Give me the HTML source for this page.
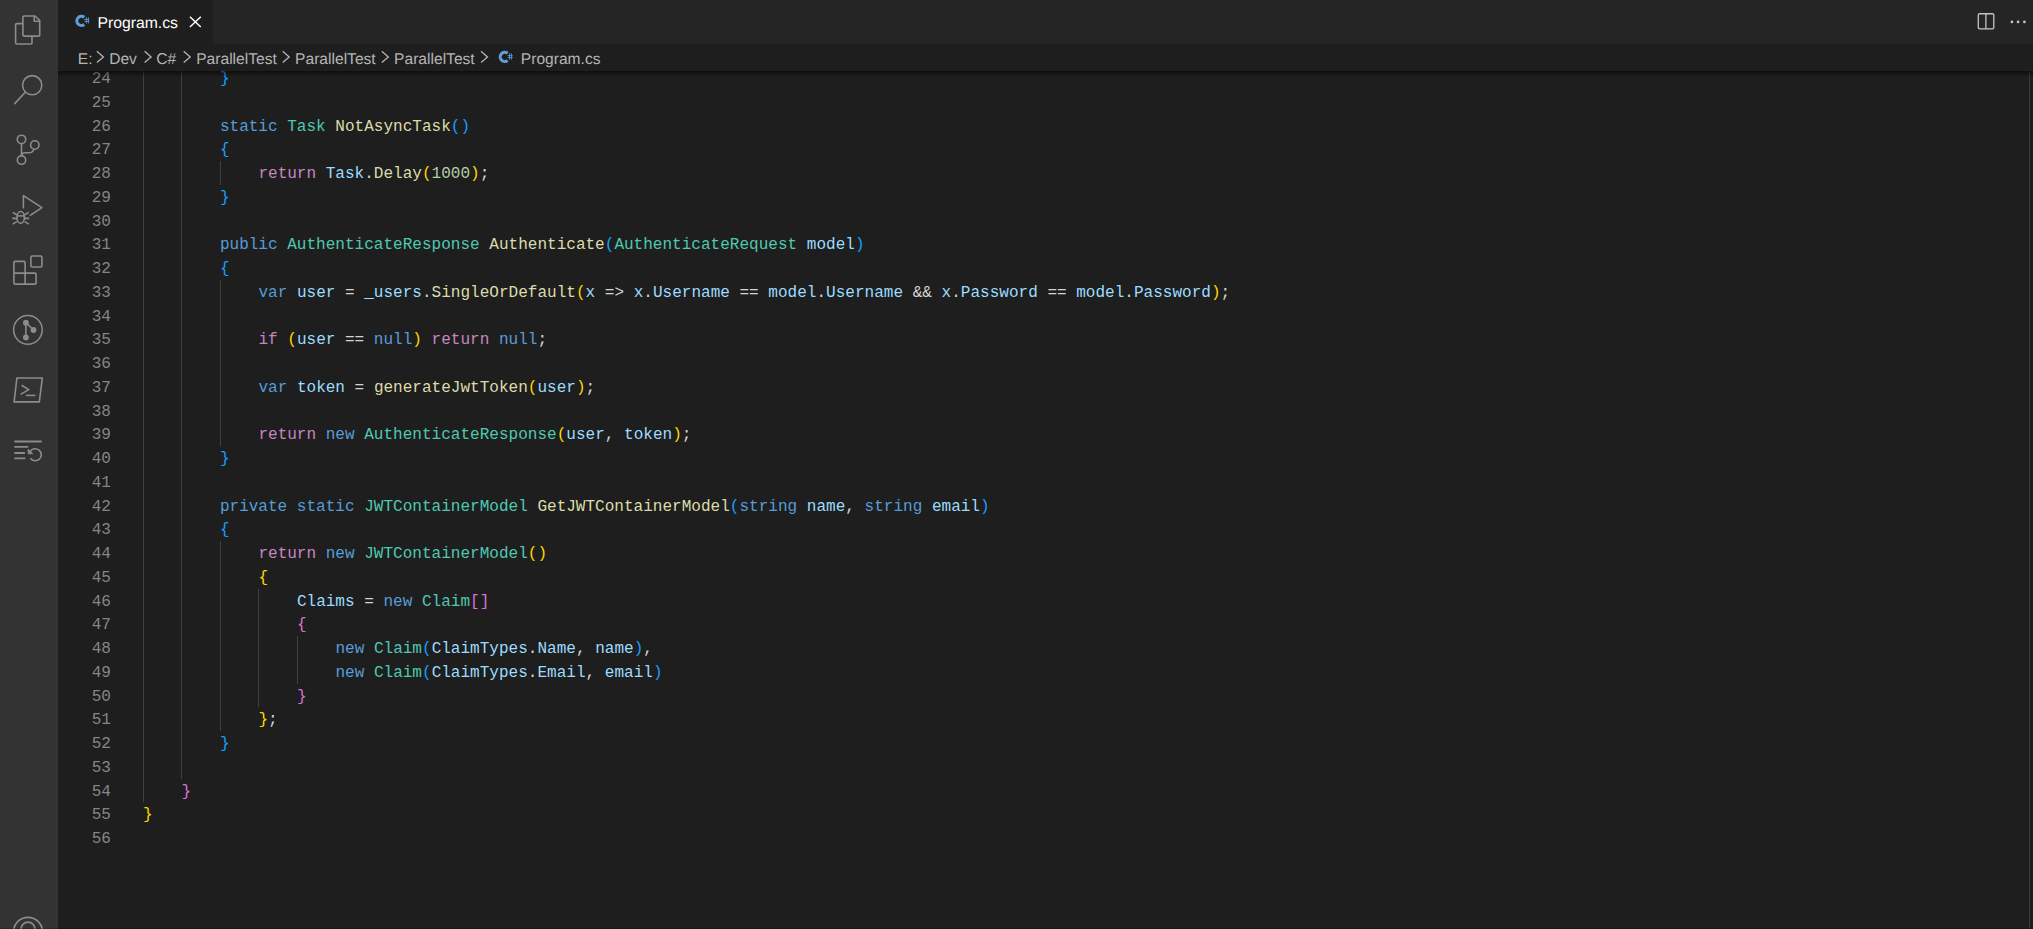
<!DOCTYPE html>
<html><head><meta charset="utf-8">
<style>
*{margin:0;padding:0;box-sizing:border-box}
html,body{width:2033px;height:929px;overflow:hidden;background:#1e1e1e}
body{position:relative;font-family:"Liberation Sans",sans-serif}
#act{position:absolute;left:0;top:0;width:58px;height:929px;background:#333333}
#tabs{position:absolute;left:58px;top:0;width:1975px;height:44px;background:#252526}
#tab{position:absolute;left:58px;top:0;width:155px;height:44px;background:#1e1e1e}
#crumbs{position:absolute;left:58px;top:44px;width:1975px;height:27px;background:#1e1e1e;z-index:5}
#shadow{position:absolute;left:58px;top:71px;width:1975px;height:6px;background:linear-gradient(rgba(0,0,0,0.55),rgba(0,0,0,0));z-index:9}
.ln{position:absolute;left:58px;width:53px;text-align:right;height:23.75px;line-height:23.75px;font-family:"Liberation Mono",monospace;font-size:16.04px;color:#858585;white-space:pre}
.cl{position:absolute;height:23.75px;line-height:23.75px;font-family:"Liberation Mono",monospace;font-size:16.04px;white-space:pre}
.g{position:absolute;width:1px;background:#404040}
.bc{position:absolute;top:49.5px;height:20px;line-height:20px;font-size:15.6px;color:#b4b4b4;white-space:pre;z-index:7;text-rendering:geometricPrecision}
svg{position:absolute;overflow:visible}
</style></head><body>
<div id="act"></div>
<div id="tabs"></div>
<div id="tab"></div>
<div id="crumbs"></div>
<div id="shadow"></div>

<!-- activity bar icons -->
<svg style="left:0;top:0;z-index:8" width="58" height="929" fill="none" stroke="#8c8c8c" stroke-width="1.6" stroke-linejoin="round">
  <!-- files -->
  <path d="M22.9 23.6H16.8a1.2 1.2 0 0 0-1.2 1.2V42.8a1.2 1.2 0 0 0 1.2 1.2H30.8a1.2 1.2 0 0 0 1.2-1.2V36.1"/>
  <path d="M24.1 16H35L39.7 20.3V34.9a1.2 1.2 0 0 1-1.2 1.2H24.1a1.2 1.2 0 0 1-1.2-1.2V17.2a1.2 1.2 0 0 1 1.2-1.2Z"/>
  <path d="M34.2 16.4V21.2H39.4"/>
  <!-- search -->
  <circle cx="32.2" cy="85.2" r="9.6"/>
  <path d="M25.2 92.2L14.7 103.6" stroke-linecap="round"/>
  <!-- source control -->
  <circle cx="21.5" cy="139.4" r="4.2"/>
  <circle cx="34.8" cy="145" r="4.2"/>
  <circle cx="21.5" cy="160.1" r="4.2"/>
  <path d="M21.5 143.6V155.9"/>
  <path d="M34 149.2C33 151.8 31.5 152.8 29 152.8H25C23 152.8 21.8 154 21.5 155.5"/>
  <!-- run & debug -->
  <path d="M23.4 208.5V195.6L41.9 207.6L29.8 215.6"/>
  <ellipse cx="20.7" cy="217.4" rx="3.7" ry="5.9"/>
  <path d="M16.8 215.9H24.6"/>
  <path d="M12.6 212.4L16.8 214.8M28.8 212.4L24.6 214.8M12.2 218.4H17M29.2 218.4H24.4M12.6 224.1L16.8 221.6M28.8 224.1L24.6 221.6"/>
  <!-- extensions -->
  <path d="M13.9 262.6a1.2 1.2 0 0 1 1.2-1.2H23.9a1.2 1.2 0 0 1 1.2 1.2V273.1H34.9a1.2 1.2 0 0 1 1.2 1.2V282.9a1.2 1.2 0 0 1-1.2 1.2H15.1a1.2 1.2 0 0 1-1.2-1.2Z"/>
  <path d="M13.9 273.1H25.1V284.1"/>
  <rect x="30.9" y="256" width="11" height="11" rx="1.2"/>
  <!-- gitlens -->
  <circle cx="27.9" cy="329.85" r="14.3" stroke-width="1.5"/>
  <path d="M25.9 322.7V337.4M25.9 322.7L33.5 330"/>
  <circle cx="25.9" cy="322.7" r="2.9" fill="#8c8c8c" stroke="none"/>
  <circle cx="33.5" cy="330" r="2.9" fill="#8c8c8c" stroke="none"/>
  <circle cx="25.9" cy="337.4" r="2.9" fill="#8c8c8c" stroke="none"/>
  <!-- powershell -->
  <path d="M16.9 378H42.3L39.3 401.9H14.1Z"/>
  <path d="M21.6 385.3L28.75 389.6L20.6 394.4"/>
  <path d="M25.9 395.4H35.4"/>
  <!-- timeline -->
  <path d="M14.3 441.5H41.7M14.3 446.9H28.2M14.3 453H24.9M14.3 458.4H25.3" stroke-width="1.8"/>
  <path d="M30.2 451.5A6 6 0 1 1 30.4 458.2"/>
  <path d="M28.1 449.2V453.8H32.8Z" fill="#8c8c8c" stroke-width="0.8"/>
  <!-- accounts (cropped) -->
  <circle cx="28" cy="932" r="14.6" stroke-width="1.6"/>
  <circle cx="28" cy="929" r="6.9" stroke-width="1.6"/>
</svg>

<!-- tab -->
<svg style="left:0;top:0;z-index:8" width="2033" height="44" fill="none">
  <path d="M84.28 17.23A4.6 4.6 0 1 0 84.28 24.47" stroke="#5f9dd8" stroke-width="3.1"/>
  <path d="M86.4 17.2V23.5M88.4 17.2V23.5M84.3 19.5H89.4M84.3 21.4H89.4" stroke="#5f9dd8" stroke-width="0.85"/>
  <path d="M189.9 16.7L200.8 27M200.8 16.7L189.9 27" stroke="#ffffff" stroke-width="1.5"/>
  <rect x="1978.3" y="13.75" width="15.5" height="15.15" rx="1.3" stroke="#c5c5c5" stroke-width="1.3"/>
  <path d="M1985.9 13.75V28.9" stroke="#c5c5c5" stroke-width="1.3"/>
  <circle cx="2011.9" cy="21.9" r="1.35" fill="#c5c5c5"/>
  <circle cx="2018.05" cy="21.9" r="1.35" fill="#c5c5c5"/>
  <circle cx="2024.4" cy="21.9" r="1.35" fill="#c5c5c5"/>
</svg>
<div style="position:absolute;left:97.4px;top:13.55px;height:20px;line-height:20px;font-size:15.75px;color:#ffffff;white-space:pre;z-index:8;text-rendering:geometricPrecision">Program.cs</div>

<!-- breadcrumbs -->
<div class="bc" style="left:77.8px">E:</div>
<div class="bc" style="left:109.2px">Dev</div>
<div class="bc" style="left:156.3px">C#</div>
<div class="bc" style="left:196.2px">ParallelTest</div>
<div class="bc" style="left:295.1px">ParallelTest</div>
<div class="bc" style="left:394.1px">ParallelTest</div>
<div class="bc" style="left:520.8px">Program.cs</div>
<svg style="left:0;top:0;z-index:8" width="2033" height="72" fill="none" stroke="#b4b4b4" stroke-width="1.3">
  <path d="M96.9 51.3L103.4 57L96.9 62.5M144.6 51.3L151.1 57L144.6 62.5M183.7 51.3L190.2 57L183.7 62.5M282.7 51.3L289.2 57L282.7 62.5M381.8 51.3L388.3 57L381.8 62.5M481 51.3L487.5 57L481 62.5"/>
  <path d="M507.63 53.33A4.6 4.6 0 1 0 507.63 60.57" stroke="#5f9dd8" stroke-width="3.1"/>
  <path d="M509.5 53.3V59.7M511.4 53.3V59.7M507.6 55.6H512.7M507.6 57.5H512.7" stroke="#5f9dd8" stroke-width="0.85"/>
</svg>

<div class="ln" style="top:68px">24</div>
<div class="cl" style="top:68px;left:219.90px"><span style="color:#179fff">}</span></div>
<div class="ln" style="top:92px">25</div>
<div class="ln" style="top:116px">26</div>
<div class="cl" style="top:116px;left:219.90px"><span style="color:#569cd6">static</span><span style="color:#d4d4d4"> </span><span style="color:#4ec9b0">Task</span><span style="color:#d4d4d4"> </span><span style="color:#dcdcaa">NotAsyncTask</span><span style="color:#179fff">()</span></div>
<div class="ln" style="top:139px">27</div>
<div class="cl" style="top:139px;left:219.90px"><span style="color:#179fff">{</span></div>
<div class="ln" style="top:163px">28</div>
<div class="cl" style="top:163px;left:258.40px"><span style="color:#c586c0">return</span><span style="color:#d4d4d4"> </span><span style="color:#9cdcfe">Task</span><span style="color:#d4d4d4">.</span><span style="color:#dcdcaa">Delay</span><span style="color:#ffd700">(</span><span style="color:#b5cea8">1000</span><span style="color:#ffd700">)</span><span style="color:#d4d4d4">;</span></div>
<div class="ln" style="top:187px">29</div>
<div class="cl" style="top:187px;left:219.90px"><span style="color:#179fff">}</span></div>
<div class="ln" style="top:211px">30</div>
<div class="ln" style="top:234px">31</div>
<div class="cl" style="top:234px;left:219.90px"><span style="color:#569cd6">public</span><span style="color:#d4d4d4"> </span><span style="color:#4ec9b0">AuthenticateResponse</span><span style="color:#d4d4d4"> </span><span style="color:#dcdcaa">Authenticate</span><span style="color:#179fff">(</span><span style="color:#4ec9b0">AuthenticateRequest</span><span style="color:#d4d4d4"> </span><span style="color:#9cdcfe">model</span><span style="color:#179fff">)</span></div>
<div class="ln" style="top:258px">32</div>
<div class="cl" style="top:258px;left:219.90px"><span style="color:#179fff">{</span></div>
<div class="ln" style="top:282px">33</div>
<div class="cl" style="top:282px;left:258.40px"><span style="color:#569cd6">var</span><span style="color:#d4d4d4"> </span><span style="color:#9cdcfe">user</span><span style="color:#d4d4d4"> = </span><span style="color:#9cdcfe">_users</span><span style="color:#d4d4d4">.</span><span style="color:#dcdcaa">SingleOrDefault</span><span style="color:#ffd700">(</span><span style="color:#9cdcfe">x</span><span style="color:#d4d4d4"> =&gt; </span><span style="color:#9cdcfe">x</span><span style="color:#d4d4d4">.</span><span style="color:#9cdcfe">Username</span><span style="color:#d4d4d4"> == </span><span style="color:#9cdcfe">model</span><span style="color:#d4d4d4">.</span><span style="color:#9cdcfe">Username</span><span style="color:#d4d4d4"> &amp;&amp; </span><span style="color:#9cdcfe">x</span><span style="color:#d4d4d4">.</span><span style="color:#9cdcfe">Password</span><span style="color:#d4d4d4"> == </span><span style="color:#9cdcfe">model</span><span style="color:#d4d4d4">.</span><span style="color:#9cdcfe">Password</span><span style="color:#ffd700">)</span><span style="color:#d4d4d4">;</span></div>
<div class="ln" style="top:306px">34</div>
<div class="ln" style="top:329px">35</div>
<div class="cl" style="top:329px;left:258.40px"><span style="color:#c586c0">if</span><span style="color:#d4d4d4"> </span><span style="color:#ffd700">(</span><span style="color:#9cdcfe">user</span><span style="color:#d4d4d4"> == </span><span style="color:#569cd6">null</span><span style="color:#ffd700">)</span><span style="color:#d4d4d4"> </span><span style="color:#c586c0">return</span><span style="color:#d4d4d4"> </span><span style="color:#569cd6">null</span><span style="color:#d4d4d4">;</span></div>
<div class="ln" style="top:353px">36</div>
<div class="ln" style="top:377px">37</div>
<div class="cl" style="top:377px;left:258.40px"><span style="color:#569cd6">var</span><span style="color:#d4d4d4"> </span><span style="color:#9cdcfe">token</span><span style="color:#d4d4d4"> = </span><span style="color:#dcdcaa">generateJwtToken</span><span style="color:#ffd700">(</span><span style="color:#9cdcfe">user</span><span style="color:#ffd700">)</span><span style="color:#d4d4d4">;</span></div>
<div class="ln" style="top:401px">38</div>
<div class="ln" style="top:424px">39</div>
<div class="cl" style="top:424px;left:258.40px"><span style="color:#c586c0">return</span><span style="color:#d4d4d4"> </span><span style="color:#569cd6">new</span><span style="color:#d4d4d4"> </span><span style="color:#4ec9b0">AuthenticateResponse</span><span style="color:#ffd700">(</span><span style="color:#9cdcfe">user</span><span style="color:#d4d4d4">, </span><span style="color:#9cdcfe">token</span><span style="color:#ffd700">)</span><span style="color:#d4d4d4">;</span></div>
<div class="ln" style="top:448px">40</div>
<div class="cl" style="top:448px;left:219.90px"><span style="color:#179fff">}</span></div>
<div class="ln" style="top:472px">41</div>
<div class="ln" style="top:496px">42</div>
<div class="cl" style="top:496px;left:219.90px"><span style="color:#569cd6">private</span><span style="color:#d4d4d4"> </span><span style="color:#569cd6">static</span><span style="color:#d4d4d4"> </span><span style="color:#4ec9b0">JWTContainerModel</span><span style="color:#d4d4d4"> </span><span style="color:#dcdcaa">GetJWTContainerModel</span><span style="color:#179fff">(</span><span style="color:#569cd6">string</span><span style="color:#d4d4d4"> </span><span style="color:#9cdcfe">name</span><span style="color:#d4d4d4">, </span><span style="color:#569cd6">string</span><span style="color:#d4d4d4"> </span><span style="color:#9cdcfe">email</span><span style="color:#179fff">)</span></div>
<div class="ln" style="top:519px">43</div>
<div class="cl" style="top:519px;left:219.90px"><span style="color:#179fff">{</span></div>
<div class="ln" style="top:543px">44</div>
<div class="cl" style="top:543px;left:258.40px"><span style="color:#c586c0">return</span><span style="color:#d4d4d4"> </span><span style="color:#569cd6">new</span><span style="color:#d4d4d4"> </span><span style="color:#4ec9b0">JWTContainerModel</span><span style="color:#ffd700">()</span></div>
<div class="ln" style="top:567px">45</div>
<div class="cl" style="top:567px;left:258.40px"><span style="color:#ffd700">{</span></div>
<div class="ln" style="top:591px">46</div>
<div class="cl" style="top:591px;left:296.90px"><span style="color:#9cdcfe">Claims</span><span style="color:#d4d4d4"> = </span><span style="color:#569cd6">new</span><span style="color:#d4d4d4"> </span><span style="color:#4ec9b0">Claim</span><span style="color:#da70d6">[]</span></div>
<div class="ln" style="top:614px">47</div>
<div class="cl" style="top:614px;left:296.90px"><span style="color:#da70d6">{</span></div>
<div class="ln" style="top:638px">48</div>
<div class="cl" style="top:638px;left:335.40px"><span style="color:#569cd6">new</span><span style="color:#d4d4d4"> </span><span style="color:#4ec9b0">Claim</span><span style="color:#179fff">(</span><span style="color:#9cdcfe">ClaimTypes</span><span style="color:#d4d4d4">.</span><span style="color:#9cdcfe">Name</span><span style="color:#d4d4d4">, </span><span style="color:#9cdcfe">name</span><span style="color:#179fff">)</span><span style="color:#d4d4d4">,</span></div>
<div class="ln" style="top:662px">49</div>
<div class="cl" style="top:662px;left:335.40px"><span style="color:#569cd6">new</span><span style="color:#d4d4d4"> </span><span style="color:#4ec9b0">Claim</span><span style="color:#179fff">(</span><span style="color:#9cdcfe">ClaimTypes</span><span style="color:#d4d4d4">.</span><span style="color:#9cdcfe">Email</span><span style="color:#d4d4d4">, </span><span style="color:#9cdcfe">email</span><span style="color:#179fff">)</span></div>
<div class="ln" style="top:686px">50</div>
<div class="cl" style="top:686px;left:296.90px"><span style="color:#da70d6">}</span></div>
<div class="ln" style="top:709px">51</div>
<div class="cl" style="top:709px;left:258.40px"><span style="color:#ffd700">}</span><span style="color:#d4d4d4">;</span></div>
<div class="ln" style="top:733px">52</div>
<div class="cl" style="top:733px;left:219.90px"><span style="color:#179fff">}</span></div>
<div class="ln" style="top:757px">53</div>
<div class="ln" style="top:781px">54</div>
<div class="cl" style="top:781px;left:181.40px"><span style="color:#da70d6">}</span></div>
<div class="ln" style="top:804px">55</div>
<div class="cl" style="top:804px;left:142.90px"><span style="color:#ffd700">}</span></div>
<div class="ln" style="top:828px">56</div>
<div class="g" style="top:66.10px;height:736.25px;left:143px"></div>
<div class="g" style="top:66.10px;height:712.50px;left:181px"></div>
<div class="g" style="top:161.10px;height:23.75px;left:220px"></div>
<div class="g" style="top:279.85px;height:166.25px;left:220px"></div>
<div class="g" style="top:541.10px;height:190.00px;left:220px"></div>
<div class="g" style="top:588.60px;height:118.75px;left:258px"></div>
<div class="g" style="top:636.10px;height:47.50px;left:297px"></div>
<div style="position:absolute;left:2029px;top:71px;width:1px;height:858px;background:#3a3a3a"></div>
<div style="position:absolute;left:0;top:928px;width:2033px;height:1px;background:rgba(0,0,0,0.2);z-index:20"></div>
</body></html>
